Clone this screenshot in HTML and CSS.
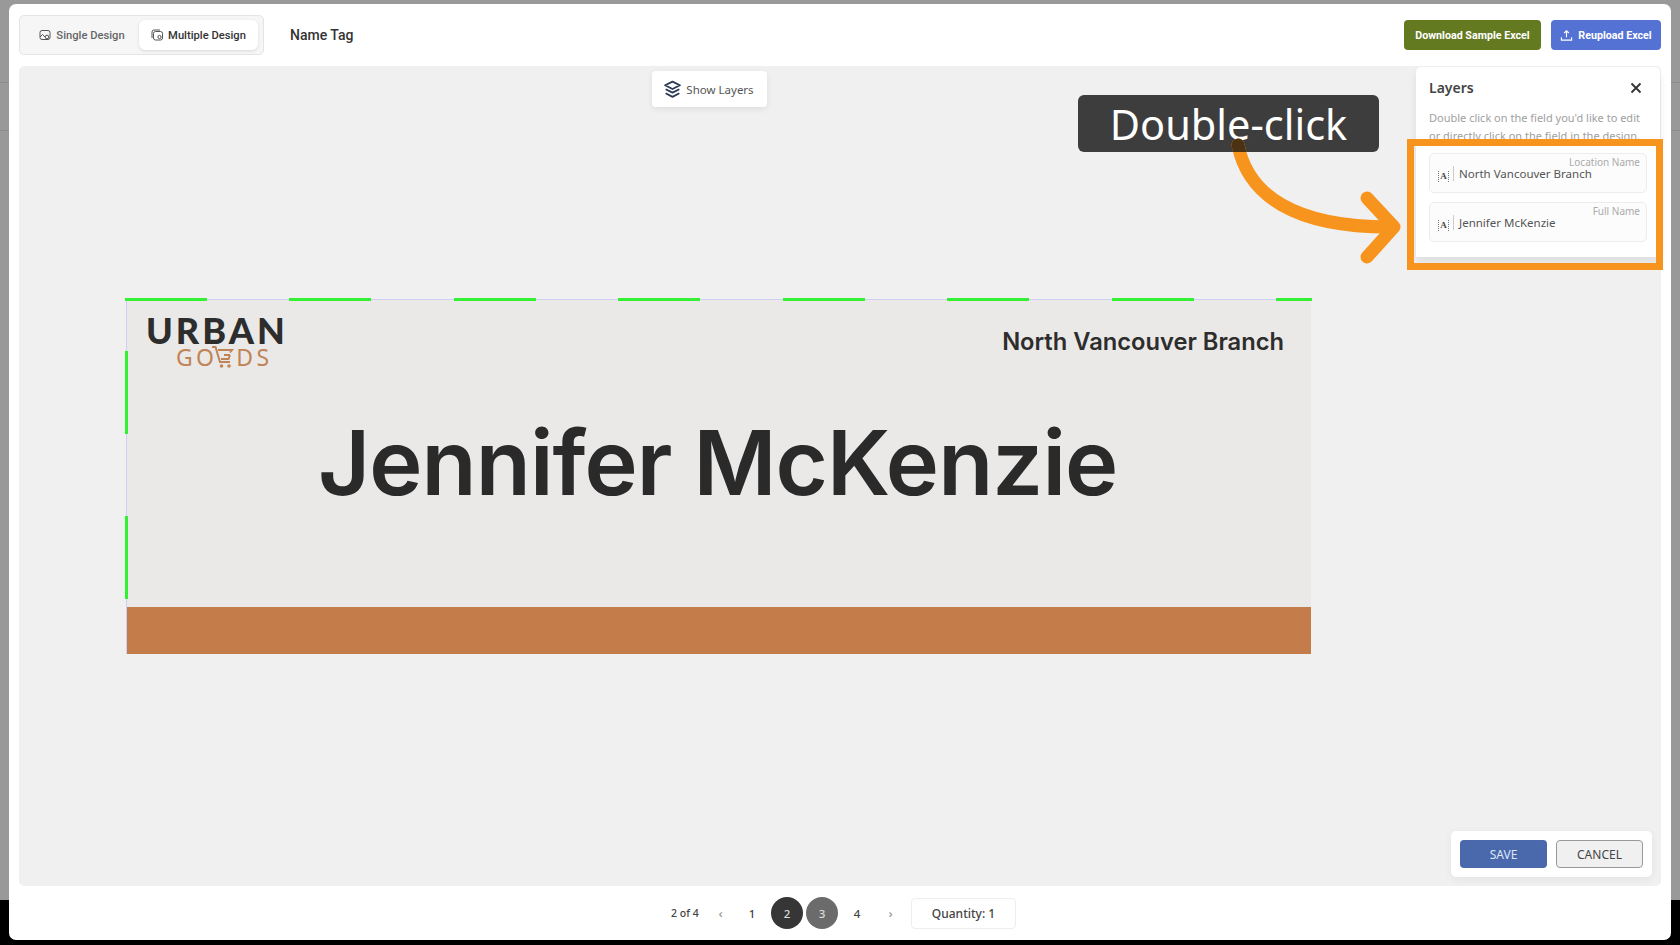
FILE: index.html
```html
<!DOCTYPE html>
<html lang="en">
<head>
    <meta charset="UTF-8">
    <title>Name Tag - Layers</title>
    <link rel="stylesheet" href="styles.css">
</head>
<body>
    <div class="modal">
        <!-- toolbar -->
        <div class="toolbar">
            <div class="tabs">
                <div class="tab">
                    <svg class="tab-icon" viewBox="0 0 12 12"><rect x="1" y="1.500" width="10" height="9" rx="2"/><circle cx="8" cy="8" r="1.800"/><path d="M1 8l2.500-2.500L6 8"/></svg>
                    Single Design
                </div>
                <div class="tab active">
                    <svg class="tab-icon" viewBox="0 0 12 12"><path d="M1 9V3a2 2 0 0 1 2-2h6"/><rect x="2.500" y="2.500" width="9" height="8.500" rx="2"/><circle cx="8.500" cy="8" r="1.600"/></svg>
                    Multiple Design
                </div>
            </div>
            <div class="doc-title">Name Tag</div>
            <div class="toolbar-actions">
                <button class="btn-top green">Download Sample Excel</button>
                <button class="btn-top blue">
                    <svg class="upload-icon" viewBox="0 0 14 14"><path d="M7 9V2M4.500 4.300L7 1.800l2.500 2.500M1.500 9v3h11V9"/></svg>
                    Reupload Excel
                </button>
            </div>
        </div>

        <!-- canvas -->
        <div class="canvas">
            <div class="show-layers">
                <svg class="layers-icon" viewBox="0 0 18 18"><path d="M9 1.500l7 3.500-7 3.500L2 5z"/><path d="M2.500 8.800L9 12l6.500-3.200"/><path d="M2.500 12.500L9 16l6.500-3.500"/></svg>
                Show Layers
            </div>

            <div class="design">
                <div class="guide-top"></div>
                <div class="guide-left"></div>
                <div class="logo">
                    <div class="logo-main">URBAN</div>
                    <div class="logo-sub">
                        <span>GO</span>
                        <svg class="logo-cart" viewBox="0 0 24 24"><path d="M1 2h3.500l4.500 15h10"/><path d="M7 5h14l-2 2.500M19 10h-6M19 10l-1.500 4H10"/><circle cx="10.500" cy="21" r="1.800" class="wheel"/><circle cx="18" cy="21" r="1.800" class="wheel"/></svg>
                        <span>DS</span>
                    </div>
                </div>
                <div class="branch">North Vancouver Branch</div>
                <div class="full-name">Jennifer McKenzie</div>
                <div class="band"></div>
            </div>

            <div class="layers-panel">
                <div class="layers-head">
                    <span class="layers-title">Layers</span>
                    <svg class="close-icon" viewBox="0 0 12 12"><path d="M1.500 1.500l9 9M10.500 1.500l-9 9"/></svg>
                </div>
                <p class="layers-hint">Double click on the field you'd like to edit or directly click on the field in the design.</p>
                <div class="field">
                    <span class="field-label">Location Name</span>
                    <span class="field-icon">A</span>
                    <span class="field-value">North Vancouver Branch</span>
                </div>
                <div class="field">
                    <span class="field-label">Full Name</span>
                    <span class="field-icon">A</span>
                    <span class="field-value">Jennifer McKenzie</span>
                </div>
            </div>

            <div class="save-box">
                <button class="btn-save">SAVE</button>
                <button class="btn-cancel">CANCEL</button>
            </div>

            <!-- tutorial overlay -->
            <div class="callout">Double-click</div>
            <div class="highlight"></div>
            <svg class="arrow" viewBox="0 0 190 140">
                <defs><clipPath id="over-callout"><rect x="0" y="0" width="60" height="19"/></clipPath></defs>
                <path class="arrow-line" d="M14 12C24 62 70 94 165 94"/>
                <path class="arrow-line" d="M143 65L170 94L143 124"/>
                <path class="arrow-dark" clip-path="url(#over-callout)" d="M14 12C24 62 70 94 165 94"/>
            </svg>
        </div>

        <!-- pager -->
        <div class="pager">
            <span class="page-count">2 of 4</span>
            <span class="page-arrow">&#8249;</span>
            <span class="page-num first">1</span>
            <span class="page-num current">2</span>
            <span class="page-num next">3</span>
            <span class="page-num">4</span>
            <span class="page-arrow last">&#8250;</span>
            <span class="quantity">Quantity: 1</span>
        </div>
    </div>
</body>
</html>
```

FILE: styles.css
```css
* {
    margin: 0;
    padding: 0;
    box-sizing: border-box;
    font-family: "Noto Sans", Arial, sans-serif;
}

body {
    width: 1680px;
    height: 945px;
    overflow: hidden;
    padding: 4px 9px 5px;
    background:
        linear-gradient(#8b8b8b, #8b8b8b) 0 82px / 100% 1px no-repeat,
        linear-gradient(#8b8b8b, #8b8b8b) 0 130px / 100% 1px no-repeat,
        linear-gradient(#999 900px, #000 900px);
}

.modal {
    height: 936px;
    background-color: #fff;
    border-radius: 7px;
    padding: 11px 10px 0;
    display: flex;
    flex-direction: column;
}

/* toolbar */
.toolbar {
    display: flex;
    align-items: center;
    height: 40px;
    flex-shrink: 0;
}

.tabs {
    display: flex;
    align-items: center;
    width: 245px;
    height: 40px;
    padding: 0 5px;
    background-color: #f6f6f6;
    border: 1px solid #e4e4e4;
    border-radius: 5px;
}

.tab {
    display: flex;
    align-items: center;
    justify-content: center;
    gap: 5px;
    width: 115px;
    height: 30px;
    font-family: Roboto, sans-serif;
    font-size: 11.200px;
    font-weight: 500;
    color: #666;
}

.tab.active {
    width: 120px;
    background-color: #fff;
    border-radius: 6px;
    color: #333;
    box-shadow: 0 1px 3px rgba(0, 0, 0, 0.12);
}

.tab-icon {
    width: 12px;
    height: 12px;
    fill: none;
    stroke: #555;
    stroke-width: 1;
}

.doc-title {
    margin-left: 26px;
    font-family: Roboto, sans-serif;
    font-size: 14px;
    font-weight: 500;
    color: #333;
}

.toolbar-actions {
    margin-left: auto;
    display: flex;
    gap: 10px;
}

.btn-top {
    height: 30px;
    border: none;
    border-radius: 4px;
    color: #fff;
    font-family: Roboto, sans-serif;
    font-size: 10.700px;
    font-weight: 700;
    display: flex;
    align-items: center;
    justify-content: center;
    gap: 5px;
}

.btn-top.green {
    width: 137px;
    background-color: #647a21;
}

.btn-top.blue {
    width: 110px;
    background-color: #5472d3;
}

.upload-icon {
    width: 13px;
    height: 13px;
    fill: none;
    stroke: #fff;
    stroke-width: 1.200;
}

/* canvas */
.canvas {
    position: relative;
    flex: 1;
    margin-top: 11px;
    background-color: #f0f0f0;
    border-radius: 5px;
}

.show-layers {
    position: absolute;
    left: 633px;
    top: 5px;
    width: 115px;
    height: 36px;
    display: flex;
    align-items: center;
    justify-content: center;
    gap: 4px;
    padding-right: 2px;
    background-color: #fff;
    border-radius: 4px;
    box-shadow: 0 2px 6px rgba(0, 0, 0, 0.08);
    font-size: 11.500px;
    color: #555;
}

.layers-icon {
    width: 19px;
    height: 19px;
    fill: none;
    stroke: #2b3a55;
    stroke-width: 1.700;
    stroke-linejoin: round;
}

/* design */
.design {
    position: absolute;
    left: 107px;
    top: 233px;
    width: 1185px;
    height: 355px;
    background-color: #ebe9e7;
    border-top: 1px solid #cfcff5;
    border-left: 1px solid #cfcff5;
}

.guide-top {
    position: absolute;
    left: -2px;
    top: -2px;
    width: 1187px;
    height: 3px;
    background: repeating-linear-gradient(90deg, #33f033 0 82px, transparent 82px 164.500px);
}

.guide-left {
    position: absolute;
    left: -2px;
    top: 51px;
    width: 3px;
    height: 248px;
    background: repeating-linear-gradient(180deg, #33f033 0 83px, transparent 83px 165px);
}

.logo {
    position: absolute;
    left: 19px;
    top: 15px;
    width: 142px;
}

.logo-main {
    font-family: Lato, sans-serif;
    font-size: 36px;
    font-weight: 900;
    line-height: 30px;
    letter-spacing: 3px;
    color: #2d2d2d;
}

.logo-sub {
    display: flex;
    align-items: center;
    margin-left: 30px;
    height: 24px;
    font-family: Lato, sans-serif;
    font-size: 23px;
    font-weight: 400;
    letter-spacing: 3.300px;
    color: #c08457;
}

.logo-cart {
    width: 24px;
    height: 24px;
    margin: 0 1px 0 -6px;
    fill: none;
    stroke: #c08457;
    stroke-width: 2;
}

.logo-cart .wheel {
    fill: #c08457;
    stroke: none;
}

.branch {
    position: absolute;
    right: 27px;
    top: 27px;
    font-family: Inter, sans-serif;
    font-size: 23.700px;
    font-weight: 600;
    color: #2d2d2d;
}

.full-name {
    position: absolute;
    left: 191px;
    top: 109px;
    font-family: Inter, sans-serif;
    font-size: 90px;
    font-weight: 600;
    letter-spacing: -0.900px;
    line-height: 1.200;
    color: #2a2a2a;
    white-space: nowrap;
}

.band {
    position: absolute;
    left: 0;
    right: 0;
    bottom: 0;
    height: 47px;
    background-color: #c47d4a;
}

/* layers panel */
.layers-panel {
    position: absolute;
    left: 1397px;
    top: 1px;
    width: 244px;
    height: 190px;
    padding: 11px 13px 0;
    background-color: #fff;
    border-radius: 5px 5px 0 0;
    box-shadow: 0 5px 8px rgba(0, 0, 0, 0.08);
    overflow: hidden;
}

.layers-head {
    display: flex;
    align-items: center;
    justify-content: space-between;
    padding-right: 5px;
}

.layers-title {
    font-size: 14px;
    font-weight: 600;
    color: #444;
}

.close-icon {
    width: 12px;
    height: 12px;
    fill: none;
    stroke: #333;
    stroke-width: 1.800;
}

.layers-hint {
    margin-top: 12px;
    height: 44px;
    font-size: 11px;
    line-height: 18px;
    color: #a0a0a0;
}

.field {
    position: relative;
    display: flex;
    align-items: center;
    height: 40px;
    margin-bottom: 9px;
    padding: 6px 0 0 8px;
    background-color: #fcfcfc;
    border: 1px solid #ececec;
    border-radius: 5px;
}

.field-label {
    position: absolute;
    right: 6px;
    top: 1px;
    font-size: 10px;
    color: #aaa;
}

.field-icon {
    width: 11px;
    height: 11px;
    margin-top: 1px;
    font-family: "Liberation Serif", serif;
    font-size: 9px;
    font-weight: 700;
    line-height: 11px;
    text-align: center;
    color: #444;
    border-left: 1px dotted #777;
    border-right: 1px dotted #777;
}

.field-value {
    margin-left: 4px;
    margin-top: -6px;
    padding-left: 5px;
    border-left: 1px solid #ccc;
    font-size: 11.500px;
    color: #555;
}

/* save / cancel */
.save-box {
    position: absolute;
    left: 1432px;
    top: 765px;
    width: 201px;
    height: 46px;
    display: flex;
    align-items: center;
    justify-content: center;
    gap: 9px;
    background-color: #fff;
    border-radius: 5px;
    box-shadow: 0 2px 8px rgba(0, 0, 0, 0.06);
}

.btn-save,
.btn-cancel {
    width: 87px;
    height: 28px;
    border-radius: 4px;
    font-size: 12px;
}

.btn-save {
    background-color: #4a69ad;
    color: #dfe6f5;
    border: none;
}

.btn-cancel {
    background-color: #f0f0f0;
    color: #444;
    border: 1px solid #999;
}

/* tutorial overlay */
.callout {
    position: absolute;
    left: 1059px;
    top: 29px;
    width: 301px;
    height: 57px;
    display: flex;
    align-items: center;
    justify-content: center;
    background-color: #3d3d3d;
    border-radius: 6px;
    font-size: 41.500px;
    color: #fff;
}

.highlight {
    position: absolute;
    left: 1388px;
    top: 73px;
    width: 256px;
    height: 131px;
    border: 7px solid #f7941e;
}

.arrow {
    position: absolute;
    left: 1205px;
    top: 67px;
    width: 190px;
    height: 140px;
    overflow: visible;
}

.arrow-line,
.arrow-dark {
    fill: none;
    stroke-width: 13;
    stroke-linecap: round;
    stroke-linejoin: round;
}

.arrow-line {
    stroke: #f7941e;
}

.arrow-dark {
    stroke: #4a3213;
}

/* pager */
.pager {
    display: flex;
    align-items: center;
    height: 54px;
    flex-shrink: 0;
    padding-left: 652px;
    font-size: 11.500px;
    font-weight: 500;
    color: #444;
}

.page-count {
    width: 39px;
    font-size: 10.500px;
}

.page-arrow {
    width: 21px;
    text-align: center;
    color: #999;
    font-size: 13px;
}

.page-arrow.last {
    margin-left: 4px;
}

.page-num {
    width: 32px;
    height: 32px;
    margin-right: 3px;
    display: flex;
    align-items: center;
    justify-content: center;
    border-radius: 50%;
}

.page-num.first {
    margin-left: 5px;
}

.page-num.current {
    background-color: #363636;
    color: #ddd;
}

.page-num.next {
    background-color: #6b6b6b;
    color: #ddd;
}

.quantity {
    width: 105px;
    height: 31px;
    margin-left: 10px;
    display: flex;
    align-items: center;
    justify-content: center;
    border: 1px solid #eceef2;
    border-radius: 4px;
    font-size: 12px;
}
```
